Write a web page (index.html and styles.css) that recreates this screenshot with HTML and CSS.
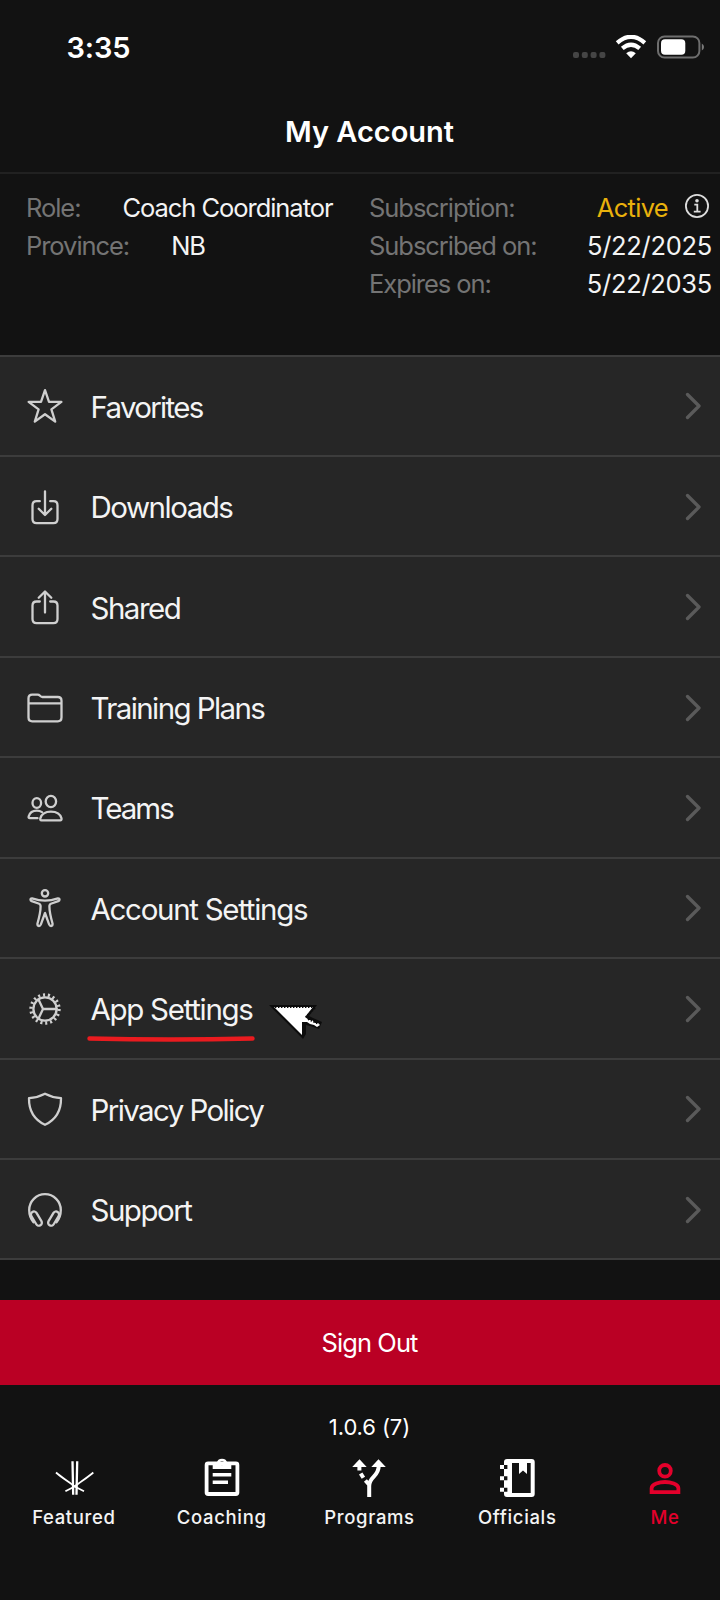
FILE: index.html
```html
<!DOCTYPE html>
<html lang="en">
<head>
    <meta charset="UTF-8">
    <meta name="viewport" content="width=device-width, initial-scale=1.0">
    <title>My Account</title>
    <link rel="stylesheet" href="styles.css">
</head>
<body>
    <div class="app">
        <div class="status-bar">
            <span class="time">3:35</span>
            <div class="status-icons">
                <svg class="signal" width="33" height="24" viewBox="0 0 33 24" fill="#454545">
                    <rect x="0" y="17" width="6" height="6" rx="2"/>
                    <rect x="8.8" y="17" width="6" height="6" rx="2"/>
                    <rect x="17.6" y="17" width="6" height="6" rx="2"/>
                    <rect x="26.4" y="17" width="6" height="6" rx="2"/>
                </svg>
                <svg class="wifi" width="32" height="24" viewBox="0 0 32 24">
                    <path d="M2.2 7.8Q16-4.2 29.8 7.8M7.3 13.4Q16 6 24.7 13.4" fill="none" stroke="#fff" stroke-width="4.2"/>
                    <path d="M11.2 18.2Q16 14.4 20.8 18.2L16 23.2Z" fill="#fff"/>
                </svg>
                <svg class="battery" width="48" height="24" viewBox="0 0 48 24">
                    <rect x="1" y="1.5" width="41.4" height="21" rx="6.5" fill="none" stroke="#6e6e6e" stroke-width="2"/>
                    <rect x="4" y="4.3" width="24.3" height="15.4" rx="4" fill="#fff"/>
                    <path d="M44.8 8.5Q47 9.5 47 12T44.8 15.5Z" fill="#7a7a7a"/>
                </svg>
            </div>
        </div>

        <h1>My Account</h1>

        <div class="info">
            <div class="info-left">
                <div class="info-row"><span class="key">Role:</span><span>Coach Coordinator</span></div>
                <div class="info-row"><span class="key">Province:</span><span>NB</span></div>
            </div>
            <div class="info-right">
                <div class="info-row">
                    <span class="key">Subscription:</span>
                    <span class="active">Active
                        <svg width="26" height="26" viewBox="0 0 26 26" fill="none" stroke="#ddd" stroke-width="1.8">
                            <circle cx="13" cy="12" r="11.1"/>
                            <circle cx="13" cy="6.7" r="1.8" fill="#ddd" stroke="none"/>
                            <path d="M10.3 10.6H13.3V17.4M9.8 17.6H16.6"/>
                        </svg>
                    </span>
                </div>
                <div class="info-row"><span class="key">Subscribed on:</span><span class="date">5/22/2025</span></div>
                <div class="info-row"><span class="key">Expires on:</span><span class="date">5/22/2035</span></div>
            </div>
        </div>

        <div class="menu">
            <div class="item">
                <svg class="icon" viewBox="-22 -22 44 44">
                    <path d="M0-15.8L4-4.1 16.4-4.1 6.4 3.3 10.2 15.6 0 8.2-10.2 15.6-6.4 3.3-16.4-4.1-4-4.1Z"/>
                </svg>
                <span class="favorites">Favorites</span>
                <svg class="chevron" viewBox="0 0 16 28"><path d="M2.5 2.5L14 14 2.5 25.5"/></svg>
            </div>
            <div class="item">
                <svg class="icon" viewBox="-22 -22 44 44">
                    <path d="M-5.2-5.8H-8.4Q-12.5-5.8-12.5-1.7V12Q-12.5 16.1-8.4 16.1H8.4Q12.5 16.1 12.5 12V-1.7Q12.5-5.8 8.4-5.8H5.2M0-15.7V7.5M-6.3 1.8L0 8 6.3 1.8"/>
                </svg>
                <span>Downloads</span>
                <svg class="chevron" viewBox="0 0 16 28"><path d="M2.5 2.5L14 14 2.5 25.5"/></svg>
            </div>
            <div class="item">
                <svg class="icon" viewBox="-22 -22 44 44">
                    <path d="M-5.2-5.5H-8.4Q-12.5-5.5-12.5-1.4V12Q-12.5 16.1-8.4 16.1H8.4Q12.5 16.1 12.5 12V-1.4Q12.5-5.5 8.4-5.5H5.2M0 5.5V-15M-6.3-9.2L0-15.5 6.3-9.2"/>
                </svg>
                <span>Shared</span>
                <svg class="chevron" viewBox="0 0 16 28"><path d="M2.5 2.5L14 14 2.5 25.5"/></svg>
            </div>
            <div class="item">
                <svg class="icon" viewBox="-22 -22 44 44">
                    <path d="M-16.5-9.7Q-16.5-13.4-12.8-13.4H-7.5Q-6-13.4-5-12.3T-2.5-11H12.8Q16.5-11 16.5-7.3V9.6Q16.5 13.3 12.8 13.3H-12.8Q-16.5 13.3-16.5 9.6ZM-16.5-4.7H16.5"/>
                </svg>
                <span class="training">Training Plans</span>
                <svg class="chevron" viewBox="0 0 16 28"><path d="M2.5 2.5L14 14 2.5 25.5"/></svg>
            </div>
            <div class="item">
                <svg class="icon" viewBox="-22 -22 44 44">
                    <ellipse cx="5.9" cy="-6.5" rx="5.2" ry="5.7"/>
                    <ellipse cx="-8.2" cy="-5" rx="4.3" ry="4.8"/>
                    <path d="M-3.6 12.3Q-5 12.3-4.7 10.4C-3.4 5.8 1 3.6 5.9 3.6S15.3 5.8 16.5 10.4Q16.8 12.3 15.2 12.3Z"/>
                    <path d="M-7.5 10.2H-15.2Q-16.8 10.2-16.3 8.3C-15.2 4.7-12 2.7-8.2 2.7-6 2.7-4.5 3.1-3 4.1"/>
                </svg>
                <span class="teams">Teams</span>
                <svg class="chevron" viewBox="0 0 16 28"><path d="M2.5 2.5L14 14 2.5 25.5"/></svg>
            </div>
            <div class="item">
                <svg class="icon" viewBox="-22 -22 44 44">
                    <circle cx="0" cy="-14.7" r="3.2"/>
                    <path d="M-13-9.7Q-6-7.3 0-7.3T13-9.7Q14.4-9.8 14.5-8.3 14.5-7.3 13.3-6.8L6.5-4.5Q4.4-3.8 4.4-1.8 4.4 4.5 7.6 15.8 7.7 17.8 6 18 4.8 18 4.1 16.4L0 5-4.1 16.4Q-4.8 18-6 18-7.7 17.8-7.6 15.8-4.4 4.5-4.4-1.8-4.4-3.8-6.5-4.5L-13.3-6.8Q-14.5-7.3-14.5-8.3-14.4-9.8-13-9.7Z"/>
                </svg>
                <span class="settings">Account Settings</span>
                <svg class="chevron" viewBox="0 0 16 28"><path d="M2.5 2.5L14 14 2.5 25.5"/></svg>
            </div>
            <div class="item">
                <svg class="icon" viewBox="-22 -22 44 44">
                    <circle cx="0" cy="0" r="11.6"/>
                    <circle class="teeth" cx="0" cy="0" r="14"/>
                    <path d="M-2 0H11.6M-2 0L-6.5-9.6M-2 0L-6.5 9.6"/>
                </svg>
                <span class="settings marked">App Settings
                    <!-- underline and pointer drawn over the row -->
                    <svg class="underline" width="168" height="7" viewBox="0 0 168 7"><path d="M2.5 2.5Q84 4.6 165.5 2.5" fill="none" stroke="#ea1b1f" stroke-width="4.4" stroke-linecap="round"/></svg>
                    <svg class="pointer" width="56" height="37" viewBox="0 0 56 37">
                        <path d="M0 1H48L40 12 44 14 53 18 50 25 41 22 37 21 37 30 34 35Z" fill="#0c0c0c"/>
                        <path d="M5 3H44L36 13 40 16 43 16 46 19 49 19 51 21 48 23 45 21 41 20 38 18 33 18 33 31Z" fill="#fff"/>
                        <path d="M6 3H45M46 4L37 13M34 19V32M39 15L50 20" fill="none" stroke="#0c0c0c" stroke-width="2" stroke-dasharray="1.4 1.6"/>
                    </svg>
                </span>
                <svg class="chevron" viewBox="0 0 16 28"><path d="M2.5 2.5L14 14 2.5 25.5"/></svg>
            </div>
            <div class="item">
                <svg class="icon" viewBox="-22 -22 44 44">
                    <path d="M0-15.3C-5-12.7-10-11.2-16-10.8-16.2 2-11 10.5 0 15.8 11 10.5 16.2 2 16-10.8 10-11.2 5-12.7 0-15.3Z"/>
                </svg>
                <span class="privacy">Privacy Policy</span>
                <svg class="chevron" viewBox="0 0 16 28"><path d="M2.5 2.5L14 14 2.5 25.5"/></svg>
            </div>
            <div class="item">
                <svg class="icon" viewBox="-22 -22 44 44">
                    <path d="M-11.5 12.3C-14.6 8.5-15.8 4-15.8 0A15.8 15.8 0 0 1 15.8 0C15.8 4 14.6 8.5 11.5 12.3"/>
                    <rect x="-3" y="-7.8" width="6" height="15.6" rx="3" transform="translate(-8.6 8.6) rotate(-31)"/>
                    <rect x="-3" y="-7.8" width="6" height="15.6" rx="3" transform="translate(8.6 8.6) rotate(31)"/>
                </svg>
                <span>Support</span>
                <svg class="chevron" viewBox="0 0 16 28"><path d="M2.5 2.5L14 14 2.5 25.5"/></svg>
            </div>
        </div>

        <button class="sign-out" type="button">Sign Out</button>
        <div class="version">1.0.6 (7)</div>

        <div class="tabs">
            <div class="tab">
                <svg viewBox="-22 0 44 44" fill="none" stroke="#fff" stroke-width="1.8">
                    <path d="M-1.5 6.3L-.8 39.7M3.2 6.3L2.5 39.7" stroke-width="2.3"/>
                    <path d="M-18 17.5C-13 22-5 27 .7 31.5L10 36.3M19.3 17.5C14.3 22 6.3 27 .7 31.5L-8.6 36.3"/>
                </svg>
                <span>Featured</span>
            </div>
            <div class="tab">
                <svg viewBox="-22 0 44 44" fill="#fff">
                    <rect x="-15.4" y="8.4" width="30.8" height="30.6" rx="1.5" fill="none" stroke="#fff" stroke-width="3.8"/>
                    <path fill-rule="evenodd" d="M-9.3 8H-5.3A5.4 5.4 0 0 1 5.3 8H9.3V14H-9.3ZM0 6A2.1 2.1 0 1 0 0 10.2 2.1 2.1 0 1 0 0 6Z"/>
                    <path d="M-9.3 17.9H9.3V21.6H-9.3ZM-9.3 25.4H6V29H-9.3Z"/>
                </svg>
                <span>Coaching</span>
            </div>
            <div class="tab">
                <svg viewBox="-22 0 44 44" fill="#fff">
                    <path d="M9.5 4.2L16.8 12H2.3ZM-9.5 4.2L-2.3 12H-16.8Z"/>
                    <path d="M9.7 11C9.7 22 .2 21 .2 31V42" fill="none" stroke="#fff" stroke-width="4"/>
                    <path d="M-9.6 12V15.5M-8.3 18.5L-5.6 22.8M-3.6 25.5L0 29.5" fill="none" stroke="#fff" stroke-width="4"/>
                </svg>
                <span>Programs</span>
            </div>
            <div class="tab">
                <svg viewBox="-22 0 44 44" fill="#fff">
                    <path fill-rule="evenodd" d="M-10 4H14.7Q17.7 4 17.7 7V39Q17.7 42 14.7 42H-10Q-13 42-13 39V7Q-13 4-10 4ZM-5 8V38H13.7V8H10V19L6 15.4 2 19V8Z"/>
                    <path d="M-17 10H-9V14H-17ZM-17 21.3H-9V25.3H-17ZM-17 32.7H-9V36.7H-17Z"/>
                    <path d="M-13 10H-9.6V14H-13ZM-13 21.3H-9.6V25.3H-13ZM-13 32.7H-9.6V36.7H-13Z" fill="#121212"/>
                </svg>
                <span>Officials</span>
            </div>
            <div class="tab selected">
                <svg viewBox="-22 0 44 44" fill="none" stroke="#e4002b" stroke-width="3.8">
                    <circle cx="0" cy="15.8" r="5.8"/>
                    <path d="M-13.4 37.2V33.2C-13.4 29.2-5.5 27 0 27S13.4 29.2 13.4 33.2V37.2Z"/>
                </svg>
                <span>Me</span>
            </div>
        </div>
    </div>
</body>
</html>
```
FILE: styles.css
```css
body {
    margin: 0;
    width: 720px;
    height: 1600px;
    overflow: hidden;
    background-color: #121212;
    color: #f4f4f4;
    font-family: Inter, "Liberation Sans", sans-serif;
}
.app {
    width: 739px;
    height: 1600px;
    background-color: #121212;
}
svg {
    display: block;
    flex: none;
}
.status-bar {
    display: flex;
    justify-content: space-between;
    align-items: center;
    height: 94px;
    box-sizing: border-box;
    padding: 0 34px 0 66.5px;
}
.time {
    font-size: 29px;
    font-weight: 600;
    letter-spacing: -0.1px;
    color: #fff;
}
.status-icons {
    display: flex;
    align-items: center;
}
.wifi {
    margin: 0 10px 0 9px;
}
h1 {
    box-sizing: border-box;
    height: 80px;
    margin: 0;
    border-bottom: 2px solid #212121;
    font-size: 29px;
    font-weight: 600;
    line-height: 76px;
    text-align: center;
    color: #fff;
}
.info {
    display: flex;
    box-sizing: border-box;
    height: 180.5px;
    padding: 14px 27px 0 26px;
    font-size: 25.5px;
    letter-spacing: -1.05px;
}
.info-left {
    width: 343px;
}
.info-right {
    flex: 1;
}
.info-row {
    display: flex;
    align-items: center;
    height: 38px;
}
.info-left .info-row {
    gap: 42px;
}
.info-right .info-row {
    justify-content: space-between;
}
.key {
    color: #747474;
}
.date {
    letter-spacing: -0.3px;
}
.active {
    display: flex;
    align-items: center;
    gap: 16px;
    margin-right: 2px;
    letter-spacing: -0.7px;
    color: #e9b10c;
}
.menu {
    border-top: 2px solid #3c3c3c;
    background-color: #262626;
}
.item {
    display: flex;
    align-items: center;
    box-sizing: border-box;
    height: 100.44px;
    padding: 1px 38px 0 23px;
    border-bottom: 2px solid #3c3c3c;
    font-size: 29.5px;
    letter-spacing: -1.5px;
}
.item span {
    padding-top: 1px;
}
.icon {
    width: 44px;
    height: 44px;
    margin-right: 23.5px;
    fill: none;
    stroke: #cfcfcf;
    stroke-width: 2.3;
    stroke-linecap: round;
    stroke-linejoin: round;
}
.teeth {
    stroke-width: 3.4;
    stroke-linecap: butt;
    stroke-dasharray: 2.1 2.787;
}
.chevron {
    width: 16px;
    height: 28px;
    margin-left: auto;
    fill: none;
    stroke: #5a5a5a;
    stroke-width: 3.3;
    stroke-linecap: round;
    stroke-linejoin: round;
}
.favorites {
    letter-spacing: -1.7px;
}
.training, .privacy {
    letter-spacing: -1.6px;
}
.teams {
    letter-spacing: -2px;
}
.settings {
    letter-spacing: -1.3px;
}
.marked {
    position: relative;
}
.underline {
    position: absolute;
    left: -4px;
    top: 46px;
}
.pointer {
    position: absolute;
    left: 178px;
    top: 14px;
}
.sign-out {
    display: block;
    width: 100%;
    height: 85px;
    margin: 40px 0 0;
    padding: 0;
    border: none;
    background-color: #ba0024;
    color: #fff;
    font-family: inherit;
    font-size: 25.5px;
    letter-spacing: -0.9px;
}
.version {
    height: 70px;
    line-height: 85px;
    font-size: 22px;
    letter-spacing: -0.1px;
    text-align: center;
    color: #fff;
}
.tabs {
    display: flex;
}
.tab {
    display: flex;
    flex: 1;
    flex-direction: column;
    align-items: center;
    font-size: 18.5px;
    font-weight: 500;
    letter-spacing: 0.65px;
}
.tab svg {
    width: 44px;
    height: 44px;
}
.tab span {
    line-height: 36px;
}
.selected {
    color: #e4002b;
}
```
